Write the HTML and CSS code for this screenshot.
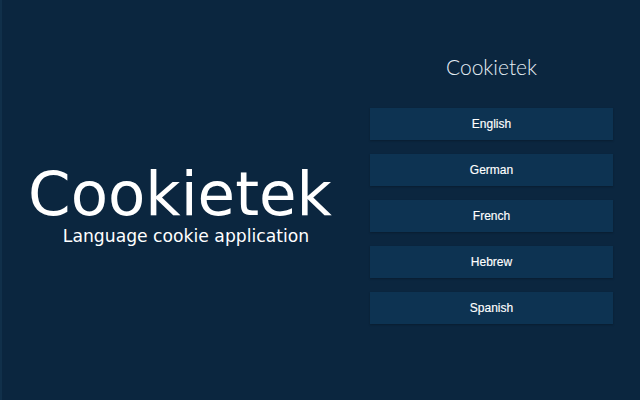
FILE: index.html
```html
<!DOCTYPE html>
<html lang="en">
<head>
<meta charset="utf-8">
<title>Cookietek</title>
<link rel="stylesheet" href="styles.css">
</head>
<body>
<div class="page">
  <section class="hero">
    <h1 class="hero-title">Cookietek</h1>
    <p class="hero-sub">Language cookie application</p>
  </section>
  <section class="panel">
    <h2 class="panel-title">Cookietek</h2>
    <div class="langs">
      <button class="lang">English</button>
      <button class="lang">German</button>
      <button class="lang">French</button>
      <button class="lang">Hebrew</button>
      <button class="lang">Spanish</button>
    </div>
  </section>
</div>
</body>
</html>
```
FILE: styles.css
```css
html, body {
  margin: 0;
  padding: 0;
  background: #0b263f;
}
.page {
  display: flex;
  width: 640px;
  height: 400px;
  box-sizing: border-box;
  border-left: 2px solid #11304a;
  background: #0b263f;
  color: #ffffff;
}
.hero {
  width: 356px;
  display: flex;
  flex-direction: column;
  justify-content: center;
  align-items: center;
  padding-top: 8px;
  box-sizing: border-box;
}
.hero-title {
  margin: 0;
  font-family: "DejaVu Sans", sans-serif;
  font-weight: normal;
  font-size: 61px;
  line-height: 61px;
}
.hero-sub {
  margin: 2px 0 0 0;
  padding-left: 12px;
  font-family: "DejaVu Sans", sans-serif;
  font-size: 17.2px;
  line-height: 20px;
}
.panel {
  width: 243px;
  margin-left: 12px;
  padding-top: 54px;
  display: flex;
  flex-direction: column;
}
.panel-title {
  margin: 0;
  text-align: center;
  font-family: Lato, "Open Sans", sans-serif;
  font-weight: 300;
  font-size: 21px;
  line-height: 26px;
  color: #e6eef5;
}
.langs {
  margin-top: 28px;
  display: flex;
  flex-direction: column;
  gap: 14px;
}
.lang {
  height: 32px;
  border: 0;
  padding: 0;
  background: #0d3352;
  color: #ffffff;
  font-family: "Liberation Sans", Arial, sans-serif;
  font-size: 12px;
  -webkit-text-stroke: 0.15px #ffffff;
  box-shadow: 0 1px 2px rgba(0, 0, 0, 0.25);
  cursor: pointer;
}
```
